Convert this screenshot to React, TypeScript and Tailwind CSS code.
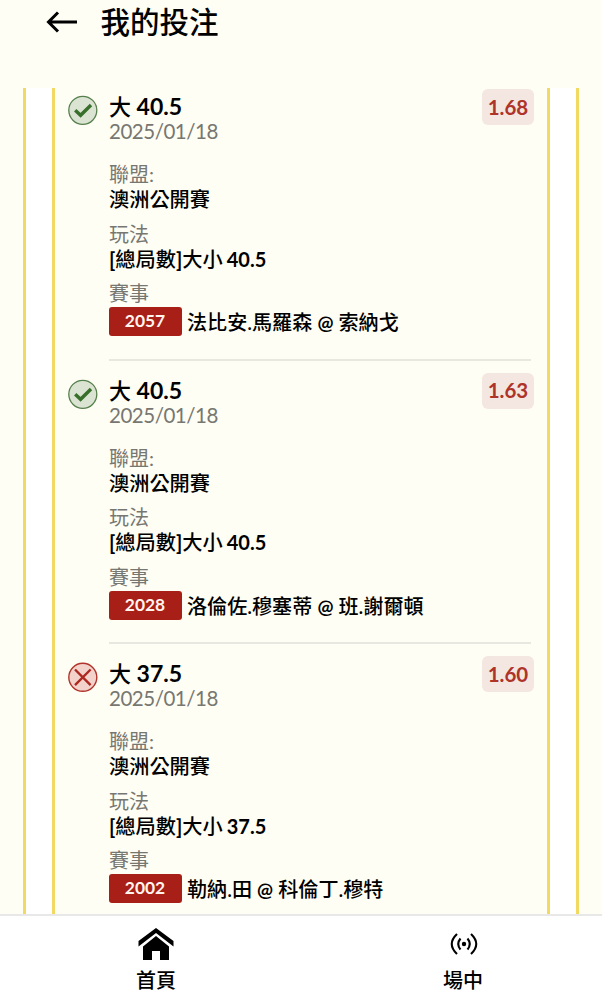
type Bet = {
  won: boolean;
  line: string;
  odds: string;
  code: string;
  home: string;
  away: string;
};

const bets: Bet[] = [
  { won: true, line: "40.5", odds: "1.68", code: "2057", home: "法比安.馬羅森", away: "索納戈" },
  { won: true, line: "40.5", odds: "1.63", code: "2028", home: "洛倫佐.穆塞蒂", away: "班.謝爾頓" },
  { won: false, line: "37.5", odds: "1.60", code: "2002", home: "勒納.田", away: "科倫丁.穆特" },
];

const StatusIcon = ({ won }: { won: boolean }) => (
  <svg width="30" height="30" viewBox="0 0 30 30" fill="none" className="block">
    {won ? (
      <>
        <circle cx="14.8" cy="15.3" r="14" fill="#dbe4d2" stroke="#557f4c" strokeWidth="1.3" />
        <path d="M7.2 15.2L12.6 20.3L23 10" stroke="#38702b" strokeWidth="3.4" />
      </>
    ) : (
      <>
        <circle cx="14.8" cy="15.3" r="14" fill="#f3d2cc" stroke="#b0342c" strokeWidth="1.4" />
        <path d="M7 7.5L22.6 23.1M22.6 7.5L7 23.1" stroke="#ad2820" strokeWidth="2.4" />
      </>
    )}
  </svg>
);

const Label = ({ text }: { text: string }) => (
  <p className="text-[20px] font-normal leading-[25px] text-[#777772]">{text}</p>
);

const BetItem = ({ bet }: { bet: Bet }) => (
  <div className="flex h-[283.5px] px-[13px]">
    <div className="w-[41px] shrink-0 pt-[7px]">
      <StatusIcon won={bet.won} />
    </div>
    <div className="min-w-0 flex-1">
      <div className="flex items-start justify-between">
        <div className="pt-[6px] leading-6">
          <p className="text-[22px] font-medium text-black">
            大 <span className="text-[23px] font-bold">{bet.line}</span>
          </p>
          <p className="text-[20.5px] tracking-[-0.48px] text-[#777772]">2025/01/18</p>
        </div>
        <span className="mt-px flex h-9 w-[52px] items-center justify-center rounded-md bg-[#f4e6e0] text-[20.5px] font-bold text-[#ae3329]">
          {bet.odds}
        </span>
      </div>
      <div className="mr-[3px] mt-[19px] h-[198.5px] border-b-2 border-[#e8e8e1]">
        <Label text="聯盟:" />
        <p className="mb-[9.5px] text-[20.2px] font-medium leading-[25px] text-black">澳洲公開賽</p>
        <Label text="玩法" />
        <p className="mb-[9.5px] text-[20.2px] font-medium leading-[25px] text-black">
          <span className="font-bold">[</span>總局數<span className="font-bold">]</span>大小{" "}
          <span className="-ml-px text-[20px] font-bold">{bet.line}</span>
        </p>
        <Label text="賽事" />
        <div className="mt-px flex items-start whitespace-nowrap">
          <span className="mr-[5px] flex h-[29px] w-[73px] items-center justify-center rounded-[3px] bg-[#a71f17] pr-px text-[17.4px] font-bold text-[#fff4ee]">
            {bet.code}
          </span>
          <span className="pt-px text-[20.1px] font-medium leading-[29px] text-black">
            {bet.home} <span className="text-[19px] font-bold">@</span> {bet.away}
          </span>
        </div>
      </div>
    </div>
  </div>
);

const HomeIcon = () => (
  <svg width="36" height="34" viewBox="0 0 36 34" fill="black">
    <path d="M18 0L35.5 13V18.5L18 5L.5 18.5V13Z" />
    <path d="M18 8L31 18.5V32H22V23H14V32H5V18.5Z" />
  </svg>
);

const LiveIcon = () => (
  <svg width="28" height="24" viewBox="0 0 28 24" fill="none" stroke="black" strokeWidth="2.1" className="ml-px">
    <circle cx="14" cy="12" r="2.2" fill="black" stroke="none" />
    <path d="M10.5 6.5Q6 12 10.5 17.5M17.5 6.5Q22 12 17.5 17.5M7 2Q-3.5 12 7 22M21 2Q31.5 12 21 22" />
  </svg>
);

export default function App() {
  return (
    <div className="flex h-[1000px] w-[602px] flex-col overflow-hidden bg-[#fffef4] font-['Lato','Noto_Sans_CJK_TC',sans-serif]">
      <header className="flex h-[88px] shrink-0 items-start pl-[46px]">
        <svg width="32" height="22" viewBox="0 0 32 22" fill="none" stroke="black" strokeWidth="3" className="mt-[11px]">
          <path d="M31 11H3M12 1.5L2.5 11L12 20.5" />
        </svg>
        <h1 className="ml-[22.5px] mt-[6px] text-[29.5px] font-medium leading-[32px] text-black">我的投注</h1>
      </header>
      <main className="h-[826px] shrink-0 overflow-hidden px-[23px]">
        <div className="border-x-[3px] border-[#f2d961] bg-white px-[26px]">
          <div className="border-x-[3px] border-[#f2d961] bg-[#fffef4]">
            {bets.map((bet) => (
              <BetItem key={bet.code} bet={bet} />
            ))}
          </div>
        </div>
      </main>
      <nav className="flex flex-1 border-t-2 border-[#e8e8e8] bg-white text-[20px] font-medium leading-6 text-black">
        <button type="button" className="flex w-[312px] shrink-0 flex-col items-center pt-[12px]">
          <HomeIcon />
          <span className="mt-[6px]">首頁</span>
        </button>
        <button type="button" className="flex w-[302px] shrink-0 flex-col items-center pt-[16px]">
          <LiveIcon />
          <span className="mt-[12px]">場中</span>
        </button>
      </nav>
    </div>
  );
}
